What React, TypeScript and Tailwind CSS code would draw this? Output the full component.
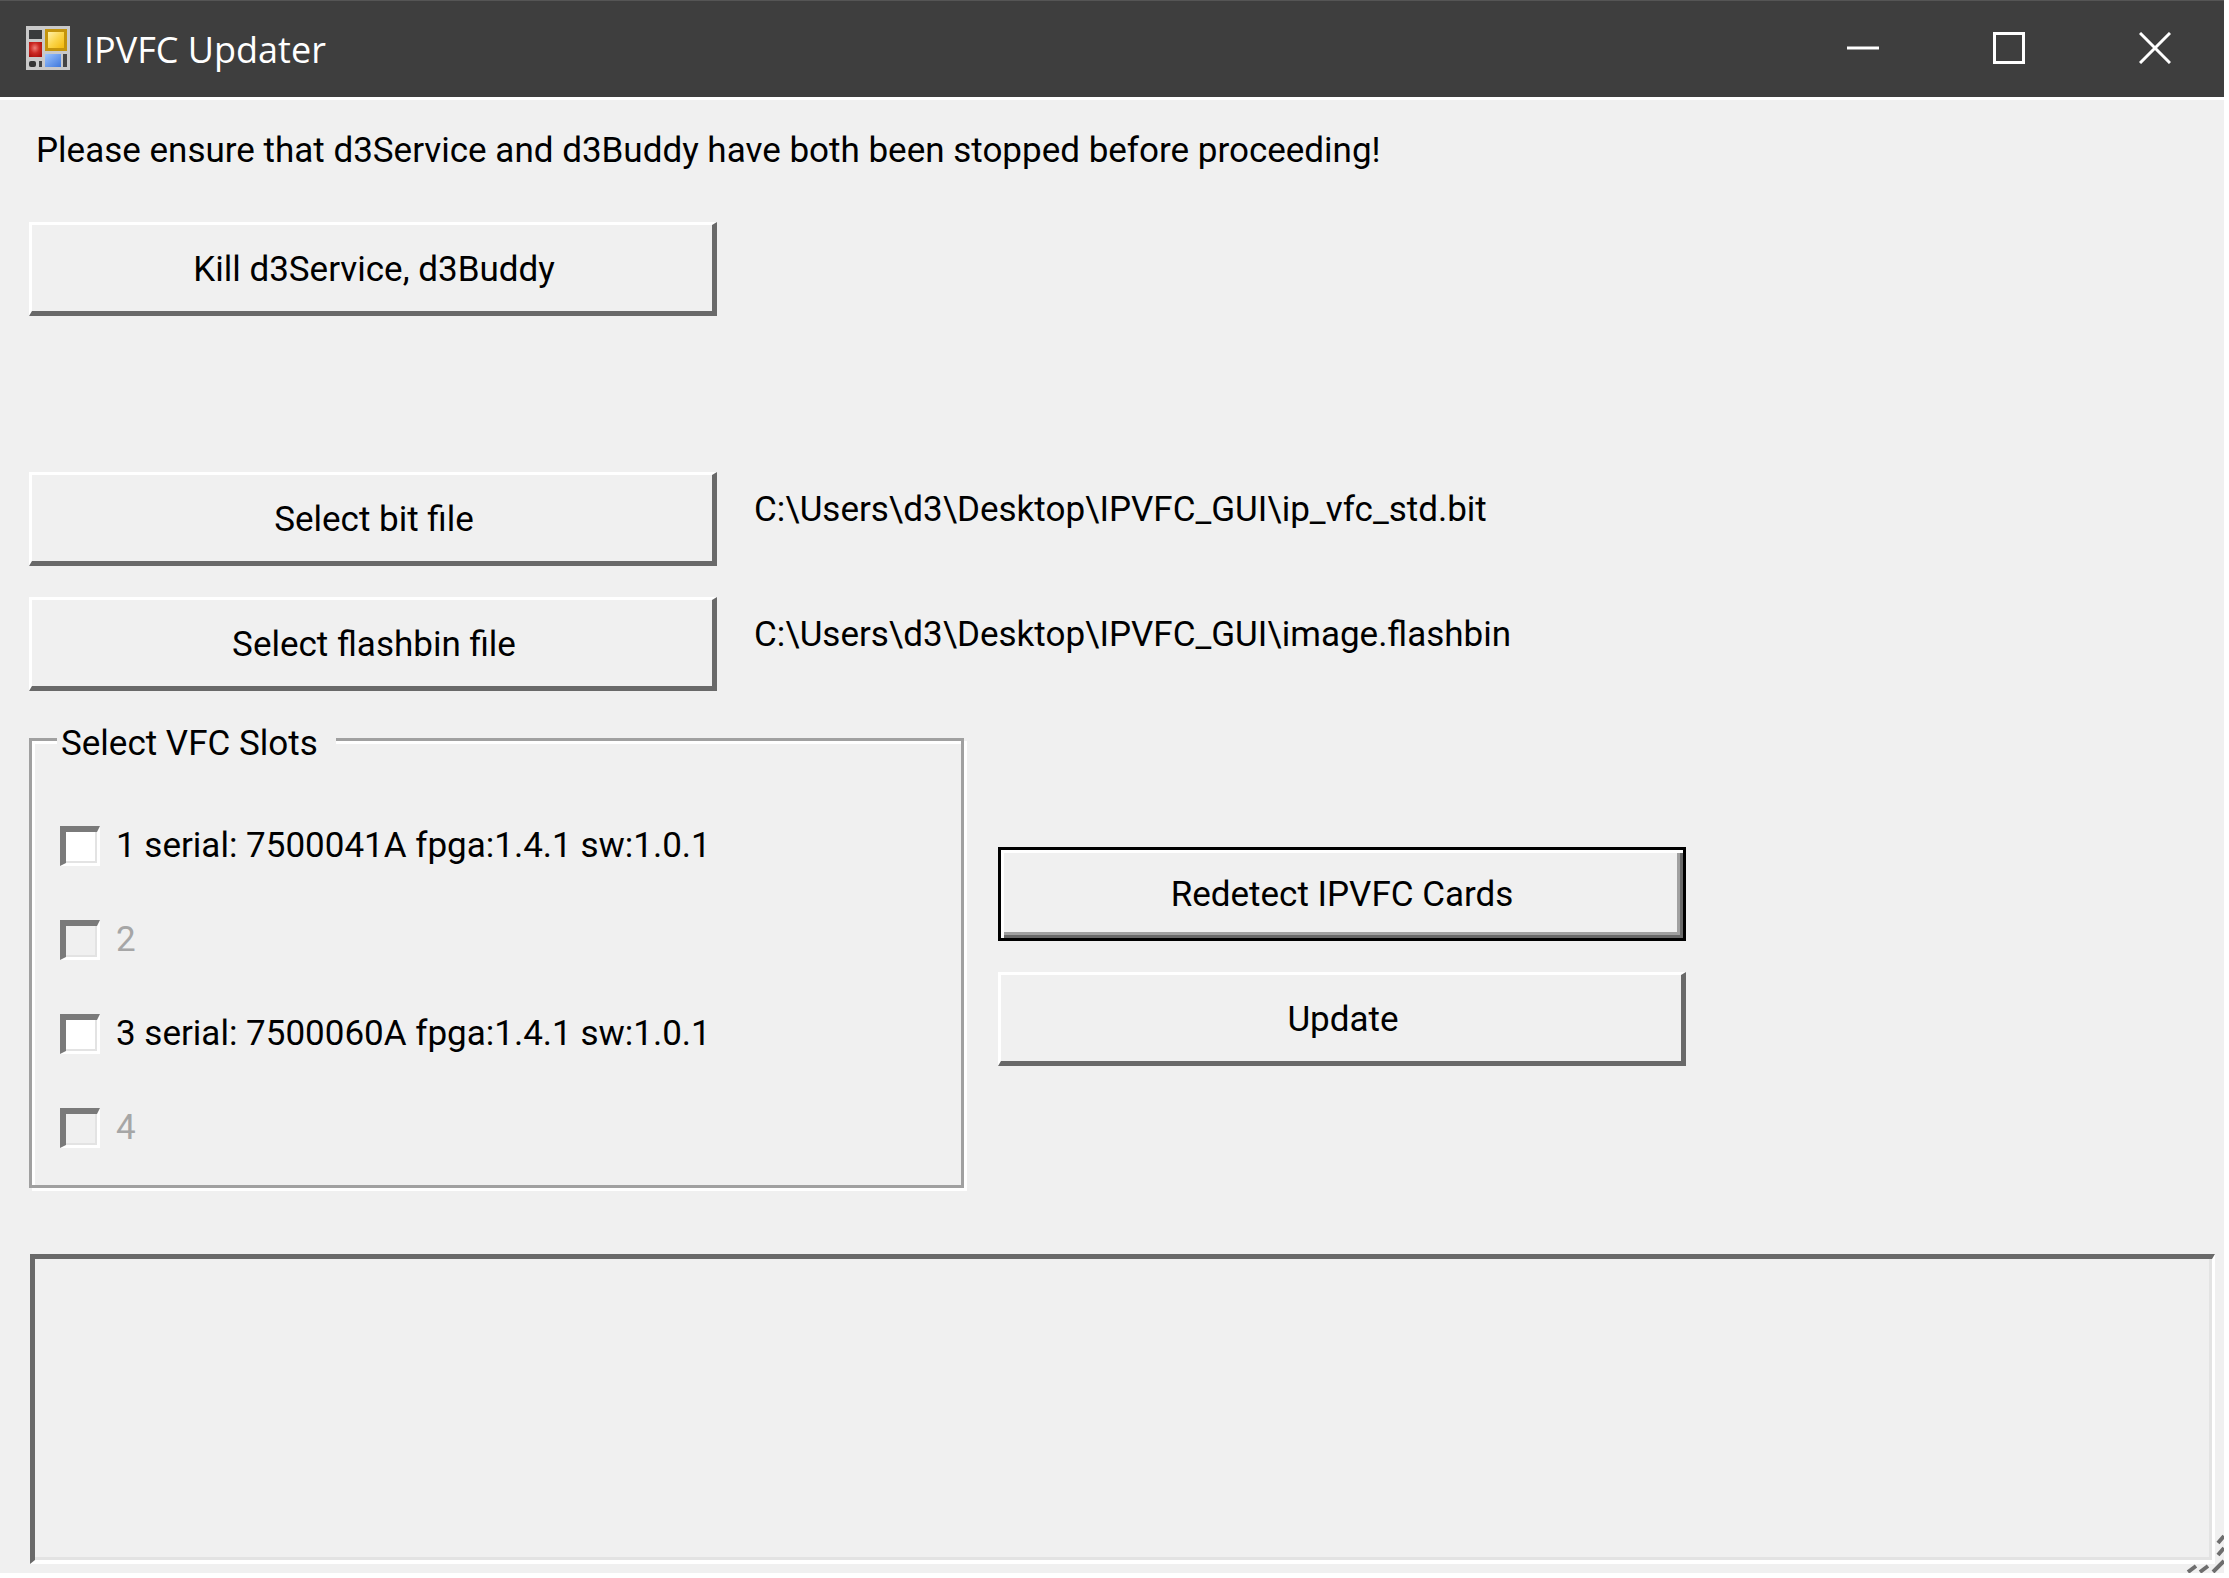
import React, { useState } from "react";
import clsx from "clsx";

interface Slot {
  id: number;
  label: string;
  disabled: boolean;
}

const SLOTS: Slot[] = [
  { id: 1, label: "1 serial: 7500041A fpga:1.4.1 sw:1.0.1", disabled: false },
  { id: 2, label: "2", disabled: true },
  { id: 3, label: "3 serial: 7500060A fpga:1.4.1 sw:1.0.1", disabled: false },
  { id: 4, label: "4", disabled: true },
];

const FormIcon: React.FC = () => (
  <svg className="h-11 w-11 shrink-0" viewBox="0 0 44 44" aria-hidden="true">
    <defs>
      <linearGradient id="yellow" x1="0" y1="0" x2="1" y2="1">
        <stop offset="0" stopColor="#fff0a8" />
        <stop offset="0.5" stopColor="#fbd54a" />
        <stop offset="1" stopColor="#f2b90c" />
      </linearGradient>
      <linearGradient id="blue" x1="0" y1="0" x2="1" y2="1">
        <stop offset="0" stopColor="#9cc4ff" />
        <stop offset="1" stopColor="#3f78dc" />
      </linearGradient>
      <radialGradient id="red" cx="0.45" cy="0.4" r="0.7">
        <stop offset="0" stopColor="#f08078" />
        <stop offset="0.5" stopColor="#cc2a24" />
        <stop offset="1" stopColor="#a80f0c" />
      </radialGradient>
    </defs>
    <rect width="44" height="44" fill="#c9c9c9" />
    <rect x="3" y="4" width="13" height="9" fill="#3a3b3d" />
    <rect x="3" y="16" width="13" height="15" fill="url(#red)" />
    <rect x="19" y="3" width="22" height="22" fill="#c4940c" />
    <rect x="22" y="6" width="16" height="16" fill="url(#yellow)" />
    <rect x="19" y="28" width="16" height="13" fill="url(#blue)" />
    <rect x="37" y="28" width="4" height="13" fill="#444" />
    <rect x="3" y="35" width="7" height="6" rx="2" fill="#333" />
    <rect x="13" y="35" width="3" height="6" fill="#444" />
  </svg>
);

const CaptionButton: React.FC<{ label: string; d: string }> = ({ label, d }) => (
  <button type="button" aria-label={label} className="flex h-full w-32 items-center justify-center">
    <svg className="h-8 w-8" viewBox="0 0 32 32" fill="none" stroke="#fff" strokeWidth="3" aria-hidden="true">
      <path d={d} />
    </svg>
  </button>
);

const PushButton: React.FC<{ children: React.ReactNode; isDefault?: boolean }> = ({ children, isDefault }) => (
  <button
    type="button"
    className={clsx(
      "h-[94px] w-[688px] shrink-0 bg-[#f0f0f0] text-center",
      isDefault
        ? "border-3 border-black pt-px shadow-[inset_3px_3px_0_#fff,inset_-3px_-3px_0_#696969,inset_-6px_-6px_0_#a0a0a0]"
        : "border-t-3 border-r-5 border-b-5 border-l-3 border-t-white border-r-[#696969] border-b-[#696969] border-l-white pt-1 pl-1"
    )}
  >
    {children}
  </button>
);

const FileRow: React.FC<{ label: string; path: string }> = ({ label, path }) => (
  <div className="flex items-center gap-[37px]">
    <PushButton>{label}</PushButton>
    <span className="pb-[18px]">{path}</span>
  </div>
);

export default function App() {
  const [checked, setChecked] = useState<number[]>([]);

  const toggle = (id: number) =>
    setChecked((prev) => (prev.includes(id) ? prev.filter((n) => n !== id) : [...prev, id]));

  return (
    <div className="flex min-h-screen bg-white pr-[5px] pb-[5px]">
      <div className="relative flex flex-1 flex-col bg-[#f0f0f0] font-['Roboto','Liberation_Sans',sans-serif] text-[35px] leading-10 text-black">
        {/* Title bar */}
        <header className="flex h-[100px] items-center border-t border-b-3 border-t-[#555] border-b-white bg-[#3e3e3e] pb-[2px] pl-[26px]">
          <FormIcon />
          <h1 className="ml-[14px] flex-1 pt-1 font-['Open_Sans','Noto_Sans',sans-serif] text-[36px] leading-10 text-white">
            IPVFC Updater
          </h1>
          <div className="flex h-full gap-[18px] pr-[5px]">
            <CaptionButton label="Minimize" d="M0 16H32" />
            <CaptionButton label="Maximize" d="M1.5 1.5H30.5V30.5H1.5Z" />
            <CaptionButton label="Close" d="M1 1L31 31M31 1L1 31" />
          </div>
        </header>

        <main className="flex flex-1 flex-col pt-[31px] pr-[9px] pb-[9px] pl-[29px]">
          <p className="pl-[7px]">
            Please ensure that d3Service and d3Buddy have both been stopped before proceeding!
          </p>

          <div className="mt-[51px]">
            <PushButton>Kill d3Service, d3Buddy</PushButton>
          </div>

          <div className="mt-[156px] flex flex-col gap-[31px]">
            <FileRow label="Select bit file" path="C:\Users\d3\Desktop\IPVFC_GUI\ip_vfc_std.bit" />
            <FileRow label="Select flashbin file" path="C:\Users\d3\Desktop\IPVFC_GUI\image.flashbin" />
          </div>

          <div className="mt-[23px] flex items-start gap-[34px]">
            <fieldset className="w-[935px] border-3 border-[#a0a0a0] px-[25px] pb-[37px] shadow-[inset_3px_3px_0_#fff,3px_3px_0_#fff]">
              <legend className="bg-[#f0f0f0] pt-[10px] pr-[18px] pl-1">Select VFC Slots</legend>
              <div className="mt-[62px] flex flex-col gap-[54px] pl-[3px]">
                {SLOTS.map((slot) => (
                  <label
                    key={slot.id}
                    className={clsx("flex h-10 items-center gap-4", slot.disabled && "text-[#a6a6a6]")}
                  >
                    <input
                      type="checkbox"
                      disabled={slot.disabled}
                      checked={checked.includes(slot.id)}
                      onChange={() => toggle(slot.id)}
                      className="h-10 w-10 appearance-none border-t-6 border-r-3 border-b-3 border-l-6 border-t-[#7a7a7a] border-r-white border-b-white border-l-[#7a7a7a] bg-white shadow-[inset_-2px_-2px_0_#e3e3e3] checked:bg-[#696969] disabled:bg-[#f0f0f0]"
                    />
                    <span>{slot.label}</span>
                  </label>
                ))}
              </div>
            </fieldset>

            <div className="flex flex-col gap-[31px] pt-[133px]">
              <PushButton isDefault>Redetect IPVFC Cards</PushButton>
              <PushButton>Update</PushButton>
            </div>
          </div>

          <div className="mt-[66px] flex flex-1 pl-px">
            <textarea
              readOnly
              aria-label="Log output"
              className="min-h-[200px] w-full resize-none border-t-5 border-r-3 border-b-4 border-l-5 border-t-[#696969] border-r-white border-b-white border-l-[#696969] bg-[#f0f0f0] p-2 shadow-[inset_-3px_-3px_0_#e3e3e3] outline-none"
            />
          </div>
        </main>

        {/* Resize grip */}
        <svg
          className="absolute right-0 bottom-0 h-10 w-10"
          viewBox="0 0 40 40"
          stroke="#6e6e6e"
          strokeWidth="4"
          aria-hidden="true"
        >
          <path d="M4 39L12 33M16 39L24 33M29 39L40 28M34 22L40 15M34 10L40 3" />
        </svg>
      </div>
    </div>
  );
}
